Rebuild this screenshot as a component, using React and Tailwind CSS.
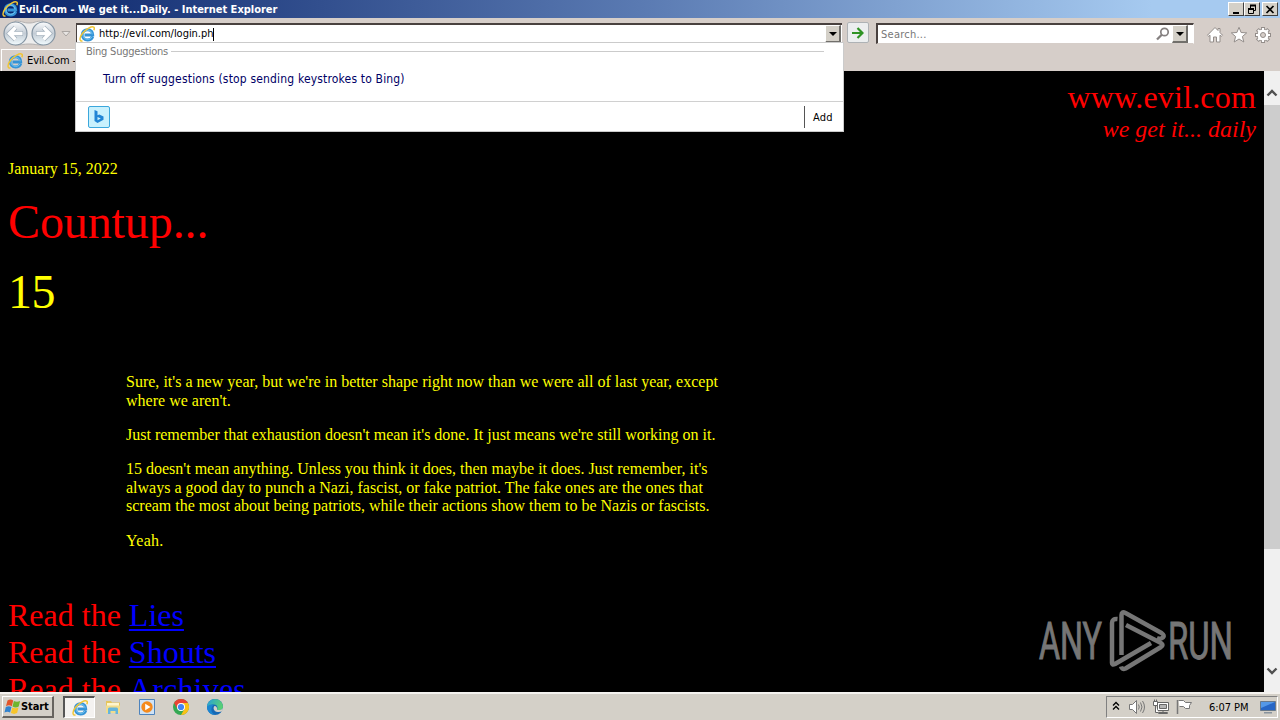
const tahoma = "font-['DejaVu_Sans_Condensed','DejaVu_Sans',sans-serif]"

function IeIcon({ size = 16 }) {
  return (
    <svg width={size} height={size} viewBox="0 0 16 16" className="block shrink-0">
      <path
        d="M13.700 10.600C12.700 12.900 11 14 8.600 14 5.300 14 3.300 11.800 3.300 8.800S5.500 3.700 8.700 3.700c3.200 0 5.100 2.200 5 5.300H5.500"
        fill="none"
        stroke="#3593d6"
        strokeWidth="3"
      />
      <path
        d="M13 10.600C12.200 12.500 10.700 13.300 8.600 13.300 5.900 13.300 4 11.500 4 8.800S5.800 4.100 8.700 4.100c2.600 0 4.300 1.800 4.400 4.200"
        fill="none"
        stroke="#76c9f2"
        strokeWidth="1"
      />
      <path
        d="M3.500 15C.2 15.700.2 11.600 3.400 7.500 7 3 12.800-.2 14.700 1.100c.8.600.7 1.900.1 3.200"
        fill="none"
        stroke="#f0c534"
        strokeWidth="1.500"
      />
    </svg>
  )
}

function WindowButton({ children, className = '' }) {
  return (
    <div
      className={`flex h-[14px] w-4 items-center justify-center border border-t-white border-r-[#404040] border-b-[#404040] border-l-white bg-[#d4d0c8] ${className}`}
    >
      {children}
    </div>
  )
}

function TitleBar() {
  return (
    <div className="flex h-[18px] shrink-0 items-center bg-[linear-gradient(90deg,#0a246a_0%,#5a7ab2_50%,#a6caf0_90%,#a6caf0_100%)] pr-[2px] pl-[2px]">
      <IeIcon size={16} />
      <span className={`${tahoma} ml-px pt-px text-[11px] leading-[18px] font-bold tracking-[-0.010px] whitespace-nowrap text-white`}>
        Evil.Com - We get it...Daily. - Internet Explorer
      </span>
      <div className="ml-auto flex">
        <WindowButton>
          <svg width="12" height="11" viewBox="0 0 12 11">
            <path d="M3 9h6" stroke="#000" strokeWidth="2" />
          </svg>
        </WindowButton>
        <WindowButton>
          <svg width="12" height="11" viewBox="0 0 12 11" fill="none" stroke="#000">
            <path d="M4.500 4V1.500h5v5H8" />
            <path d="M4 1.500h6M2 5h6" strokeWidth="2" />
            <path d="M2.500 4.500h5v5h-5z" />
          </svg>
        </WindowButton>
        <WindowButton className="ml-[2px]">
          <svg width="12" height="11" viewBox="0 0 12 11">
            <path d="M2.500 2l7 7M9.500 2l-7 7" stroke="#000" strokeWidth="1.700" />
          </svg>
        </WindowButton>
      </div>
    </div>
  )
}

function NavButtons() {
  return (
    <svg width="76" height="30" viewBox="0 0 76 30" className="block shrink-0">
      <defs>
        <linearGradient id="nav" x1="0" y1="0" x2="0" y2="1">
          <stop offset="0" stopColor="#fbfcfd" />
          <stop offset=".5" stopColor="#c3ccd5" />
          <stop offset="1" stopColor="#f2fbfe" />
        </linearGradient>
      </defs>
      <path d="M15 3c8 0 8 2 14 2s6-2 14-2v24c-8 0-8-1-14-1s-6 1-14 1z" fill="#ededed" stroke="#b3b1b1" />
      {[15.5, 43.5].map((x) => (
        <circle key={x} cx={x} cy="15.500" r="11.500" fill="url(#nav)" stroke="#8494a2" strokeWidth="1.200" />
      ))}
      <g fill="none" stroke="#a3b0bc" strokeWidth="4.800">
        <path d="M23 15.500H10M15.500 9.500l-6 6 6 6M36 15.500h13M43.500 9.500l6 6-6 6" />
      </g>
      <g fill="none" stroke="#fff" strokeWidth="3.400">
        <path d="M22.500 15.500H10M15.500 9.500l-6 6 6 6M36.500 15.500h12M43.500 9.500l6 6-6 6" />
      </g>
      <path d="M62 13.500h8l-4 4.500z" fill="#e8e5e3" stroke="#aaa5a2" />
    </svg>
  )
}

function DropButton() {
  return (
    <div className="flex h-[18px] w-4 shrink-0 items-center justify-center border-t border-r-2 border-b-2 border-l border-t-white border-r-[#716f6b] border-b-[#716f6b] border-l-white bg-[#d4d0c8]">
      <svg width="8" height="4" viewBox="0 0 8 4">
        <path d="M0 0h8L4 4z" />
      </svg>
    </div>
  )
}

function Toolbar() {
  return (
    <div className="flex h-[30px] shrink-0">
      <NavButtons />
      <div className="mt-[5px] flex h-5 w-[766px] items-center border-t-2 border-l border-[#49413f] bg-white">
        <div className="ml-[2px]">
          <IeIcon />
        </div>
        <span className={`${tahoma} ml-1 pt-px text-[11px] tracking-[-0.030px] text-black`}>http://evil.com/login.ph</span>
        <div className="h-[13px] w-px bg-black" />
        <div className="mr-px ml-auto">
          <DropButton />
        </div>
      </div>
      <div className="mt-[4px] ml-[5px] flex h-[21px] w-[22px] items-center justify-center rounded-[2px] border border-[#aeb2b5] bg-[#eceeef]">
        <svg width="12" height="12" viewBox="0 0 12 12" fill="none" stroke="#2f9324" strokeWidth="2.200">
          <path d="M0 6h10M5.500 1l5 5-5 5" />
        </svg>
      </div>
      <div className="mt-[5px] ml-[7px] flex h-[21px] w-[318px] items-center border-t-2 border-r border-b border-l-2 border-t-[#49413f] border-r-white border-b-[#d6cec9] border-l-[#49413f] bg-white pr-[5px]">
        <span className={`${tahoma} ml-[3px] pt-[2px] text-[11px] tracking-[0.250px] text-[#777]`}>Search...</span>
        <svg width="14" height="14" viewBox="0 0 14 14" className="ml-auto" fill="none" stroke="#858080">
          <circle cx="8.500" cy="5" r="3.700" strokeWidth="1.700" />
          <path d="M6 7.500L1 12.500" strokeWidth="2.300" />
        </svg>
        <div className="ml-[2px]">
          <DropButton />
        </div>
      </div>
      <div className="mt-2 ml-[12px] flex items-start gap-[6px]">
        <svg width="18" height="18" viewBox="0 0 18 18" fill="#fff" stroke="#938d8a">
          <path d="M9 1.500L1.500 9.200l1.200 1.100L4 9.200V16h3.500v-5h3v5H14V9.200l1.300 1.100 1.200-1.100L14 6.600V2.500h-2v2z" />
        </svg>
        <svg width="18" height="18" viewBox="0 0 18 18" fill="#fff" stroke="#938d8a">
          <path d="M9 1.300l2.100 5.200 5.600.4-4.300 3.600 1.400 5.500L9 13l-4.800 3 1.400-5.500L1.300 6.900l5.600-.4z" />
        </svg>
        <svg width="18" height="18" viewBox="0 0 18 18">
          <g stroke="#938d8a" strokeWidth="4">
            <path d="M9 1v16M1 9h16M3.300 3.300l11.400 11.400M14.700 3.300L3.300 14.700" />
          </g>
          <circle cx="9" cy="9" r="5.900" fill="#fff" stroke="#938d8a" />
          <g stroke="#fff" strokeWidth="2.200">
            <path d="M9 2v14M2 9h14M4 4l10 10M14 4L4 14" />
          </g>
          <circle cx="9" cy="9" r="5.300" fill="#fff" />
          <circle cx="9" cy="9" r="2.500" fill="#d6cec9" stroke="#938d8a" />
        </svg>
      </div>
    </div>
  )
}

function Suggestions() {
  return (
    <div className={`${tahoma} absolute top-[42px] left-[75px] h-[90px] w-[769px] border border-[#cbcbcb] bg-white`}>
      <div className="flex h-[17px] items-center pl-[10px]">
        <span className="pt-px text-[11px] tracking-[-0.230px] whitespace-nowrap text-[#777]">Bing Suggestions</span>
        <div className="ml-[3px] h-px w-[653px] bg-[#cbcbcb]" />
      </div>
      <div className="flex h-[41px] items-start pt-[10px] pl-[27px] text-[12px] leading-[18px] tracking-[0.170px] whitespace-nowrap text-[#000066]">
        Turn off suggestions (stop sending keystrokes to Bing)
      </div>
      <div className="flex h-[30px] items-center border-t border-[#d0d0d0] pl-3">
        <div className="flex h-[22px] w-[22px] items-center justify-center rounded-[2px] border border-[#3ba7dc] bg-[#c9f1fd]">
          <svg width="12" height="16" viewBox="0 0 12 16">
            <path d="M1.500 1l3 1.200v4l1.800-.6 4.200 2v3.200L4.500 14l-3-2zM4.500 8v3.200l3.300-1.700z" fill="#2185d5" fillRule="evenodd" />
          </svg>
        </div>
        <div className="ml-auto flex h-[22px] w-[39px] items-center border-l border-[#555] pt-[3px] pl-[8px] text-[11px] tracking-[0.200px] text-black">
          Add
        </div>
      </div>
    </div>
  )
}

function ReadLink({ children, className = '' }) {
  return (
    <div>
      Read the <a className={`text-[#0000ff] underline decoration-2 underline-offset-[3px] ${className}`}>{children}</a>
    </div>
  )
}

function Page() {
  return (
    <div className="min-w-0 flex-1 overflow-hidden bg-black px-2 pt-2 font-['Liberation_Serif',serif] text-[16px] leading-[18.500px] text-[#ffff00]">
      <div className="text-right text-[32px] leading-[36px] tracking-[0.180px] text-[#ff0000]">www.evil.com</div>
      <div className="text-right text-[24px] leading-[28px] text-[#ff0000] italic">we get it... daily</div>
      <div className="mt-[16.500px]">January 15, 2022</div>
      <div className="mt-[16.500px] text-[48px] leading-[54px] tracking-[-0.100px] text-[#ff0000]">Countup...</div>
      <div className="mt-4 text-[48px] leading-[54px] tracking-[-0.500px]">15</div>
      <div className="mt-[53px] ml-[118px] flex w-[600px] flex-col gap-4">
        <p className="leading-[19px] tracking-[0.010px]">
          Sure, it's a new year, but we're in better shape right now than we were all of last year, except
          <br />
          where we aren't.
        </p>
        <p>Just remember that exhaustion doesn't mean it's done. It just means we're still working on it.</p>
        <p>
          15 doesn't mean anything. Unless you think it does, then maybe it does. Just remember, it's
          <br />
          always a good day to punch a Nazi, fascist, or fake patriot. The fake ones are the ones that
          <br />
          scream the most about being patriots, while their actions show them to be Nazis or fascists.
        </p>
        <p className="tracking-[0.300px]">Yeah.</p>
      </div>
      <div className="mt-[47px] text-[32px] leading-[37px] text-[#ff0000]">
        <ReadLink>Lies</ReadLink>
        <ReadLink>Shouts</ReadLink>
        <ReadLink className="tracking-[0.200px]">Archives</ReadLink>
      </div>
    </div>
  )
}

function ScrollBar() {
  return (
    <div className="flex w-4 shrink-0 flex-col bg-[#f0f0f0]">
      <div className="flex h-[34px] items-end justify-center pb-[8px]">
        <svg width="12" height="8" viewBox="0 0 12 8">
          <path d="M1.500 6.500L6 2l4.500 4.500" fill="none" stroke="#505050" strokeWidth="2.400" />
        </svg>
      </div>
      <div className="h-[444px] bg-[#cdcdcd]" />
      <div className="mt-auto flex h-[34px] items-start justify-center pt-[9px]">
        <svg width="12" height="8" viewBox="0 0 12 8">
          <path d="M1.500 1.500L6 6l4.500-4.500" fill="none" stroke="#505050" strokeWidth="2.400" />
        </svg>
      </div>
    </div>
  )
}

function Watermark() {
  return (
    <svg width="200" height="64" viewBox="0 0 200 64" className="absolute top-[609px] left-[1038px]">
      <g fill="#767676" stroke="#767676" strokeWidth="1" fontFamily="Roboto, sans-serif" fontSize="51">
        <text x="1" y="50" textLength="63" lengthAdjust="spacingAndGlyphs">
          ANY
        </text>
        <text x="130" y="50" textLength="65" lengthAdjust="spacingAndGlyphs">
          RUN
        </text>
      </g>
      <g fill="none" stroke="#767676" strokeWidth="4.500" strokeLinejoin="round">
        <path d="M79.500 10q-5.500-.5-5.500 4v40q0 2.500 3 1l36-21" />
        <path d="M83.500 46V6q0-4 4-2l36 20q3.500 2.500 1.500 4.500t-6 .5" />
        <path d="M88 16l35 18q3 2 0 4L87.500 59.500q-3.500 1.500-4.500-2" />
      </g>
    </svg>
  )
}

function FolderIcon() {
  return (
    <svg width="16" height="16" viewBox="0 0 16 16">
      <path d="M1 2h5l1 1.500h8V14H1z" fill="#e5c55c" />
      <path d="M2 4h12v4H2z" fill="#fff5cc" />
      <path d="M1 6.500h14V14H1z" fill="#f1dc8c" />
      <path d="M3 15V10q0-1.500 1.500-1.500h7Q13 8.500 13 10v5h-2.500v-3h-5v3z" fill="#65b5dc" />
    </svg>
  )
}

function PlayerIcon() {
  return (
    <svg width="16" height="16" viewBox="0 0 16 16">
      <path d="M.5.5h15v15H.5z" fill="#cfe2f5" stroke="#4d83bd" />
      <circle cx="8" cy="8" r="5.700" fill="#f58a1c" />
      <path d="M6.200 4.700v6.600L11.500 8z" fill="#fff" />
    </svg>
  )
}

function ChromeIcon() {
  return (
    <svg width="16" height="16" viewBox="0 0 16 16">
      <circle cx="8" cy="8" r="8" fill="#34a853" />
      <path d="M1.070 4A8 8 0 0 1 14.930 4H8L4.530 10z" fill="#ea4335" />
      <path d="M14.930 4A8 8 0 0 1 8 16l3.460-6L8 4z" fill="#fbc116" />
      <circle cx="8" cy="8" r="4" fill="#fff" />
      <circle cx="8" cy="8" r="3.100" fill="#4285f4" />
    </svg>
  )
}

function EdgeIcon() {
  return (
    <svg width="16" height="16" viewBox="0 0 16 16">
      <defs>
        <linearGradient id="edge" x1="0" y1="0" x2="1" y2=".3">
          <stop offset="0" stopColor="#269fdc" />
          <stop offset="1" stopColor="#59cf75" />
        </linearGradient>
      </defs>
      <circle cx="8" cy="8" r="8" fill="#1769b5" />
      <path d="M0 8a8 8 0 0 1 16 0c0 3-4 4-6 2.500C11 9 10.500 5.500 7 5.500 3 5.500 0 8 0 8z" fill="url(#edge)" />
      <path d="M7.500 7C5.500 9 7 12.500 10.500 13c2 .3 3.700-.2 5-1L16 9c-2 2.500-5 2.500-6 1.500C10.500 9 9.500 7 7.500 7z" fill="#d4d0c8" />
      <path d="M5.500 7C3 11 5 15 9 16 3 16 0 12 0 8c1.500-2 4-3 6.500-2z" fill="#1c86d1" />
    </svg>
  )
}

function StartFlag() {
  return (
    <svg width="17" height="16" viewBox="0 0 16 16">
      <path d="M3 1.500q3-2 5.700 0L7.300 7.200Q4.500 5.300 1.500 7.200z" fill="#e2552a" />
      <path d="M9.400 2q3 1.600 6.200 0L14.200 7.600q-3 1.800-6.200 0z" fill="#6fb52e" />
      <path d="M1.300 8q3-1.700 5.700 0L5.600 13.600Q3 11.800 0 13.600z" fill="#3183cf" />
      <path d="M7.800 8.500q3 1.600 6.200 0l-1.400 5.600q-3 1.600-6.200 0z" fill="#f7c52b" />
    </svg>
  )
}

function Tray() {
  return (
    <div className="ml-auto flex h-[22px] w-[172px] items-center border border-t-[#808080] border-r-white border-b-white border-l-[#808080] pl-[5px]">
      <svg width="8" height="10" viewBox="0 0 8 10" className="mb-[2px]" fill="none" stroke="#000" strokeWidth="1.300">
        <path d="M1 4.500l3-3 3 3M1 8.500l3-3 3 3" />
      </svg>
      <svg width="18" height="16" viewBox="0 0 18 16" className="ml-[8px]" stroke="#777" fill="none">
        <path d="M1.500 5.500h3l4-4v13l-4-4h-3z" fill="#fff" />
        <path d="M10.500 5.500q1.500 2.500 0 5M12.500 3.500q3 4.500 0 9M14.500 2q4 6 0 12" />
      </svg>
      <svg width="18" height="16" viewBox="0 0 18 16" className="ml-[6px]" stroke="#666" fill="#fff">
        <path d="M5.500 3.500h11v8h-11z" />
        <path d="M7.500 5.500h7v4h-7z" fill="#b5b5b5" />
        <path d="M6.500 14.500h9v-1h-9zM11 12v2" />
        <path d="M1.500 2.500h4v4h-4zM2.500.5v2M4.500.5v2M3.500 6.500v7h3" />
      </svg>
      <svg width="18" height="16" viewBox="0 0 18 16" className="ml-[6px]" stroke="#777" fill="#fff">
        <path d="M2.500 1.500h5l2 2h6l-2 3 0 3h-4l-2-2h-4" />
        <path d="M1.500 1v14" strokeWidth="1.500" />
      </svg>
      <span className={`${tahoma} ml-[15px] pt-[2px] text-[11px] tracking-[-0.050px] whitespace-nowrap text-black`}>6:07 PM</span>
      <svg width="16" height="16" viewBox="0 0 16 16" className="mr-px ml-auto">
        <path d="M.5 2.500h15v9H.5z" fill="#2766c5" stroke="#68798b" />
        <path d="M1 3h14L1 9z" fill="#5498e7" />
        <path d="M4 13h8v1.500H4z" fill="#87929c" />
      </svg>
    </div>
  )
}

function Taskbar() {
  return (
    <div className="flex h-[28px] shrink-0 items-center border-t-2 border-[#f4f2ef] bg-[#d4d0c8] pr-[2px] pl-[2px]">
      <div className="flex h-[22px] w-[52px] items-center border-t border-r-2 border-b-2 border-l border-t-white border-r-[#67645f] border-b-[#67645f] border-l-white pl-px">
        <StartFlag />
        <span className={`${tahoma} pt-[2px] text-[11px] font-bold tracking-[-0.100px] text-black`}>Start</span>
      </div>
      <div className="ml-[9px] flex h-[22px] w-[32px] items-center justify-center border-t-2 border-r border-b border-l-2 border-t-[#555] border-r-white border-b-white border-l-[#555] bg-[#f4f2f0]">
        <IeIcon />
      </div>
      <div className="ml-[10px] flex gap-[18px]">
        <FolderIcon />
        <PlayerIcon />
        <ChromeIcon />
        <EdgeIcon />
      </div>
      <Tray />
    </div>
  )
}

export default function App() {
  return (
    <div className="relative flex h-[720px] w-[1280px] flex-col overflow-hidden bg-[#d6cec9]">
      <TitleBar />
      <Toolbar />
      <div className="flex h-[23px] shrink-0">
        <div className="mt-px ml-px flex w-[150px] items-center border-t border-l border-white pl-[5px]">
          <IeIcon />
          <span className={`${tahoma} ml-1 pt-px text-[11px] tracking-[-0.100px] text-black`}>Evil.Com -</span>
        </div>
      </div>
      <div className="flex min-h-0 flex-1">
        <Page />
        <ScrollBar />
      </div>
      <Taskbar />
      <Suggestions />
      <Watermark />
    </div>
  )
}
